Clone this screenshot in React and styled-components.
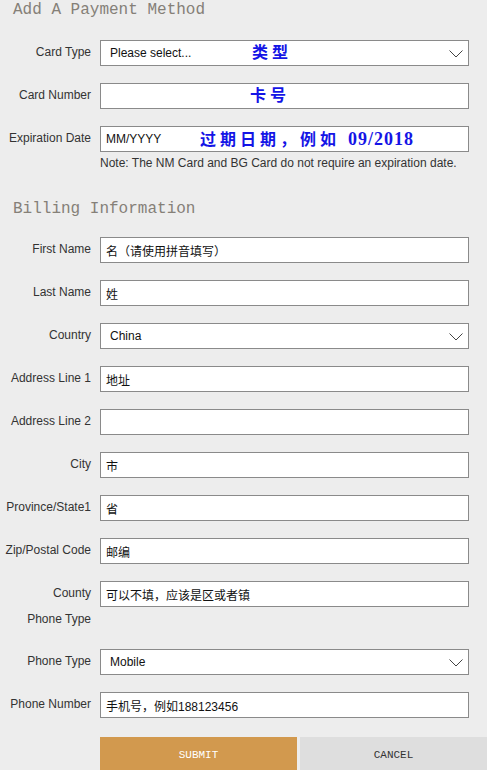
import React from "react";
import styled, { createGlobalStyle } from "styled-components";

const GlobalStyle = createGlobalStyle`
    html, body {
        margin: 0;
        padding: 0;
        background: #ededed;
    }
    body {
        font-family: "Liberation Sans", Arial, "Noto Sans CJK SC", sans-serif;
    }
`;

const Page = styled.div`
    width: 487px;
    height: 770px;
    overflow: hidden;
    background: #ededed;
    display: flex;
    flex-direction: column;
`;

const Heading = styled.h2`
    margin: ${(p) => p.$top || 0}px 0 0 13px;
    height: 20px;
    font-family: "Liberation Mono", "Noto Sans CJK SC", monospace;
    font-weight: normal;
    font-size: 16px;
    line-height: 20px;
    color: #858078;
`;

const Row = styled.div`
    display: flex;
    align-items: flex-start;
    margin-top: ${(p) => (p.$top === undefined ? 17 : p.$top)}px;
`;

const Label = styled.label`
    width: 91px;
    flex: none;
    text-align: right;
    padding-top: 5px;
    font-size: 12px;
    line-height: 14px;
    color: #333;
    white-space: nowrap;
`;

const LoneLabel = styled(Label)`
    display: block;
    width: 91px;
    padding-top: 0;
    margin-top: 5px;
    height: 20px;
`;

const Field = styled.div`
    position: relative;
    margin-left: 9px;
    width: 369px;
    height: 26px;
    flex: none;
`;

const TextInput = styled.input`
    box-sizing: border-box;
    width: 100%;
    height: 26px;
    margin: 0;
    border: 1px solid #8a8a8a;
    background: #fff;
    padding: 0 0 0 5px;
    font-family: "Liberation Sans", Arial, "Noto Sans CJK SC", sans-serif;
    font-size: 12px;
    color: #111;
    outline: none;
`;

const Select = styled.select`
    box-sizing: border-box;
    width: 100%;
    height: 26px;
    margin: 0;
    border: 1px solid #8a8a8a;
    border-radius: 0;
    background: #fff;
    padding: 0 0 0 9px;
    font-family: "Liberation Sans", Arial, "Noto Sans CJK SC", sans-serif;
    font-size: 12px;
    color: #111;
    appearance: none;
    -webkit-appearance: none;
    outline: none;
`;

const Chevron = styled.svg`
    position: absolute;
    right: 6px;
    top: 10px;
    pointer-events: none;
`;

const Annotation = styled.span`
    position: absolute;
    left: ${(p) => p.$left}px;
    top: 0;
    height: 26px;
    line-height: 26px;
    font-family: "Liberation Serif", "Noto Sans CJK SC", serif;
    font-weight: bold;
    font-size: 16px;
    letter-spacing: 4px;
    color: #1414e6;
    white-space: nowrap;
    pointer-events: none;
`;

const Digits = styled.span`
    font-size: 18px;
    letter-spacing: 1px;
`;

const Note = styled.p`
    margin: 4px 0 0 100px;
    font-size: 12px;
    line-height: 14px;
    color: #333;
`;

const Buttons = styled.div`
    display: flex;
    gap: 3px;
    margin: 19px 0 0 100px;
`;

const Button = styled.button`
    height: 35px;
    border: none;
    border-radius: 0;
    width: ${(p) => p.$w}px;
    background: ${(p) => (p.$primary ? "#d2994e" : "#dedede")};
    color: ${(p) => (p.$primary ? "#fff" : "#333")};
    font-family: "Liberation Mono", monospace;
    font-size: 11px;
    padding: 0;
`;

const ChevronIcon = () => (
    <Chevron width="14" height="8" viewBox="0 0 14 8">
        <path d="M0.5 0.5 L7 7 L13.5 0.5" fill="none" stroke="#444" strokeWidth="1" />
    </Chevron>
);

const InputRow = ({ label, value, top, children }) => (
    <Row $top={top}>
        <Label>{label}</Label>
        <Field>
            <TextInput defaultValue={value} />
            {children}
        </Field>
    </Row>
);

const SelectRow = ({ label, options, top, children }) => (
    <Row $top={top}>
        <Label>{label}</Label>
        <Field>
            <Select defaultValue={options[0]}>
                {options.map((o) => (
                    <option key={o}>{o}</option>
                ))}
            </Select>
            <ChevronIcon />
            {children}
        </Field>
    </Row>
);

const App = () => {
    return (
        <Page>
            <GlobalStyle />
            <Heading>Add A Payment Method</Heading>
            <SelectRow label="Card Type" options={["Please select..."]} top={20}>
                <Annotation $left={152}>类型</Annotation>
            </SelectRow>
            <InputRow label="Card Number" value="">
                <Annotation $left={150}>卡号</Annotation>
            </InputRow>
            <InputRow label="Expiration Date" value="MM/YYYY">
                <Annotation $left={100}>
                    过期日期，例如 <Digits>09/2018</Digits>
                </Annotation>
            </InputRow>
            <Note>Note: The NM Card and BG Card do not require an expiration date.</Note>

            <Heading $top={29}>Billing Information</Heading>
            <InputRow label="First Name" value="名（请使用拼音填写）" top={18} />
            <InputRow label="Last Name" value="姓" />
            <SelectRow label="Country" options={["China"]} />
            <InputRow label="Address Line 1" value="地址" />
            <InputRow label="Address Line 2" value="" />
            <InputRow label="City" value="市" />
            <InputRow label="Province/State1" value="省" />
            <InputRow label="Zip/Postal Code" value="邮编" />
            <InputRow label="County" value="可以不填，应该是区或者镇" />
            <LoneLabel>Phone Type</LoneLabel>
            <SelectRow label="Phone Type" options={["Mobile"]} />
            <InputRow label="Phone Number" value="手机号，例如188123456" />

            <Buttons>
                <Button $primary $w={197}>SUBMIT</Button>
                <Button $w={187}>CANCEL</Button>
            </Buttons>
        </Page>
    );
};

export default App;
